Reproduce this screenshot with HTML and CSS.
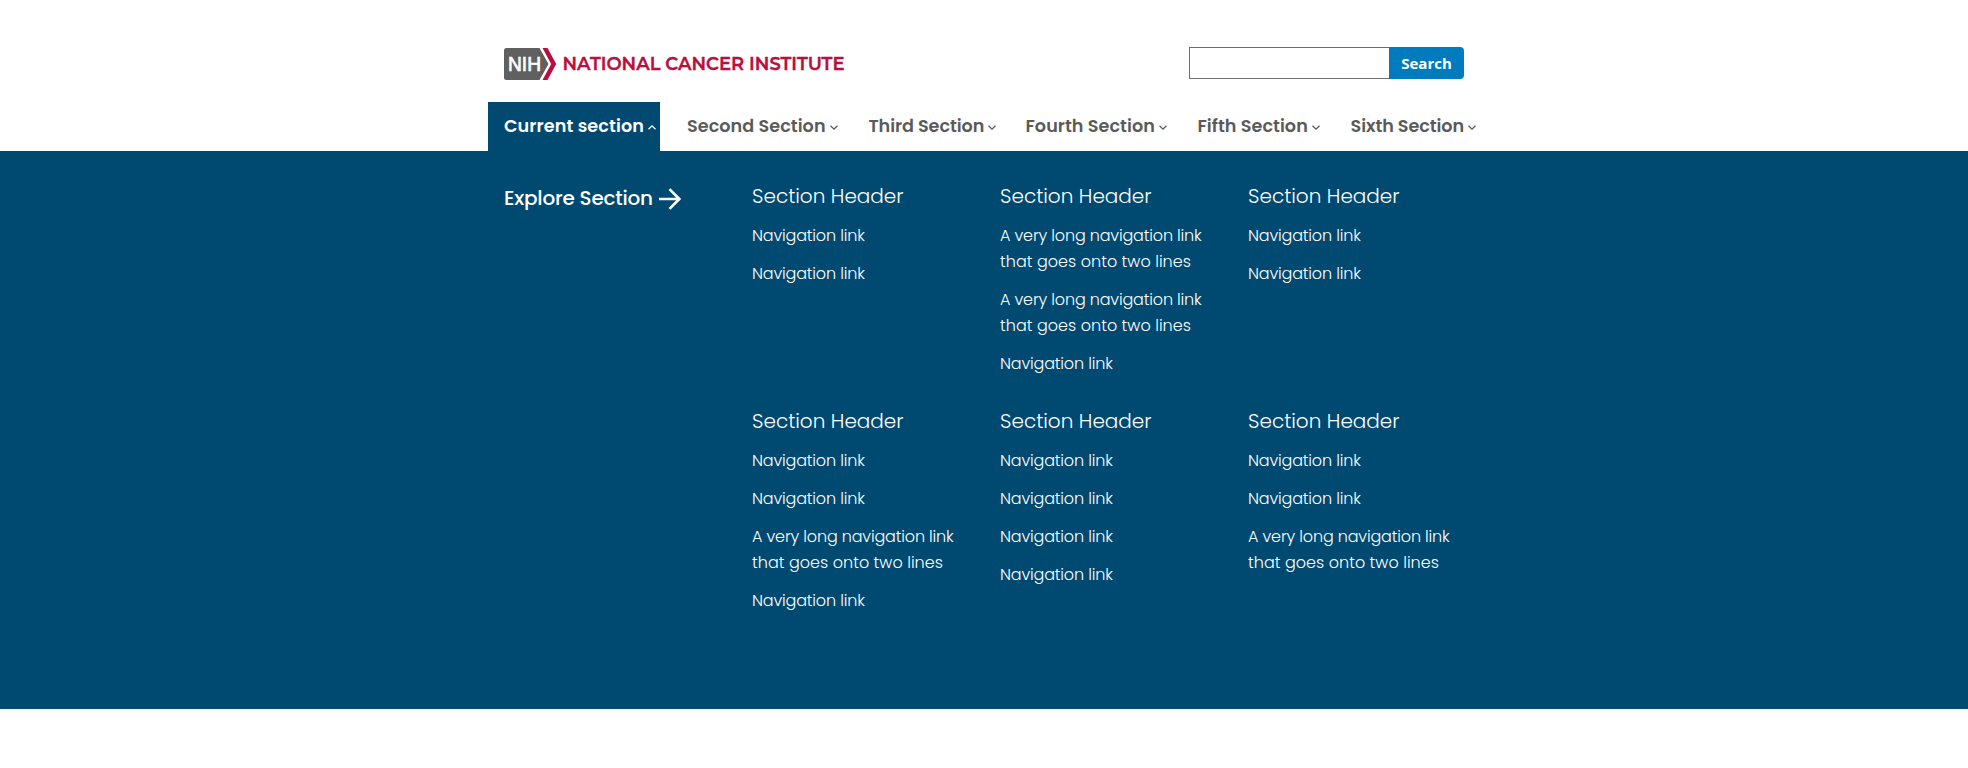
FILE: index.html
```
<!DOCTYPE html>
<html lang="en">
<head>
<meta charset="utf-8">
<title>National Cancer Institute</title>
<link rel="stylesheet" href="styles.css">
</head>
<body>
<header class="header">
  <div class="masthead">
    <a class="logo" aria-label="NIH National Cancer Institute">
      <svg width="342" height="32" viewBox="0 0 342 32">
        <path d="M2.500 0H35.500L44.500 16L35.500 32H2.500Q0 32 0 29.500V2.500Q0 0 2.500 0Z" fill="#606060"/>
        <path d="M38.500 0H43.500L52.200 16L43.500 32H38.500L47.200 16Z" fill="#bb0e3d"/>
        <text class="logo-nih" x="4" y="23" textLength="33" lengthAdjust="spacingAndGlyphs">NIH</text>
        <text class="logo-name" x="58.500" y="22" textLength="282" lengthAdjust="spacingAndGlyphs">NATIONAL CANCER INSTITUTE</text>
      </svg>
    </a>
    <form class="search">
      <input class="search-field" type="text" aria-label="Search">
      <button class="search-button" type="button">Search</button>
    </form>
  </div>
  <nav class="primary">
    <a class="item current"><span>Current section</span><svg class="chevron" viewBox="0 0 8 5"><path d="M.5 4.300L4 .8L7.500 4.300"/></svg></a>
    <a class="item"><span>Second Section</span><svg class="chevron" viewBox="0 0 8 5"><path d="M.5 .7L4 4.200L7.500 .7"/></svg></a>
    <a class="item tight"><span>Third Section</span><svg class="chevron" viewBox="0 0 8 5"><path d="M.5 .7L4 4.200L7.500 .7"/></svg></a>
    <a class="item"><span>Fourth Section</span><svg class="chevron" viewBox="0 0 8 5"><path d="M.5 .7L4 4.200L7.500 .7"/></svg></a>
    <a class="item"><span>Fifth Section</span><svg class="chevron" viewBox="0 0 8 5"><path d="M.5 .7L4 4.200L7.500 .7"/></svg></a>
    <a class="item tight"><span>Sixth Section</span><svg class="chevron" viewBox="0 0 8 5"><path d="M.5 .7L4 4.200L7.500 .7"/></svg></a>
  </nav>
</header>
<section class="mega">
  <div class="mega-inner">
    <a class="explore"><span>Explore Section</span><svg class="arrow" viewBox="0 0 22 22"><path d="M0 11H20M10.500 1.200L20.300 11L10.500 20.800"/></svg></a>
    <div class="groups">
      <div class="group">
        <h2>Section Header</h2>
        <ul><li>Navigation link</li><li>Navigation link</li></ul>
      </div>
      <div class="group">
        <h2>Section Header</h2>
        <ul>
          <li>A very long navigation link <span class="second-line">that goes onto two lines</span></li>
          <li>A very long navigation link <span class="second-line">that goes onto two lines</span></li>
          <li>Navigation link</li>
        </ul>
      </div>
      <div class="group">
        <h2>Section Header</h2>
        <ul><li>Navigation link</li><li>Navigation link</li></ul>
      </div>
      <div class="group">
        <h2>Section Header</h2>
        <ul>
          <li>Navigation link</li><li>Navigation link</li>
          <li>A very long navigation link <span class="second-line">that goes onto two lines</span></li>
          <li>Navigation link</li>
        </ul>
      </div>
      <div class="group">
        <h2>Section Header</h2>
        <ul><li>Navigation link</li><li>Navigation link</li><li>Navigation link</li><li>Navigation link</li></ul>
      </div>
      <div class="group">
        <h2>Section Header</h2>
        <ul>
          <li>Navigation link</li><li>Navigation link</li>
          <li>A very long navigation link <span class="second-line">that goes onto two lines</span></li>
        </ul>
      </div>
    </div>
  </div>
</section>
</body>
</html>
```
FILE: styles.css
```
* { box-sizing: border-box; }
body { margin: 0; background: #fff; font-family: Poppins, Inter, "Open Sans", sans-serif; }
a { color: inherit; text-decoration: none; }

.header { width: 992px; height: 151px; margin: 0 auto; padding-top: 47px; }
.masthead { display: flex; justify-content: space-between; height: 55px; padding: 0 16px; }
.logo { height: 32px; padding-top: 1px; }
.logo svg { display: block; overflow: visible; }
.logo-nih { font: 19.5px "Liberation Sans", Arial, sans-serif; fill: #fff; stroke: #fff; stroke-width: .7px; }
.logo-name { font: 600 18px Montserrat, Lato, sans-serif; fill: #bb0e3d; stroke: #bb0e3d; stroke-width: .35px; }

.search { display: flex; height: 32px; margin: 0; }
.search-field { width: 200px; height: 32px; padding: 0 8px; border: 1px solid #6f6f6f; border-right: 0; border-radius: 0; background: #fff; outline: 0; }
.search-button { width: 75px; height: 32px; padding: 0; border: 0; border-radius: 0 4px 4px 0; background: #007bbd; color: #fff; font: 700 15px/32px "Open Sans", sans-serif; }

.primary { display: grid; grid-template-columns: 183px 181.5px 157px 172px 153px 145px; height: 49px; color: #5a5a5a; }
.item { display: flex; align-items: center; gap: 4px; padding-left: 16px; font-size: 17.6px; font-weight: 600; line-height: 26px; letter-spacing: .05px; white-space: nowrap; }
.item span { margin-bottom: 2px; }
.tight { letter-spacing: -.07px; }
.current { width: 172px; letter-spacing: .1px; background: #004971; color: #fff; }
.chevron { width: 8px; height: 5px; margin-top: 1px; overflow: visible; fill: none; stroke: currentColor; stroke-width: 1.3; }

.mega { height: 558px; background: #004971; color: #fff; }
.mega-inner { display: flex; width: 960px; margin: 0 auto; padding-top: 30px; }
.explore { display: flex; align-items: center; gap: 6px; width: 248px; height: 34px; font-size: 20px; font-weight: 500; letter-spacing: -.22px; white-space: nowrap; }
.arrow { width: 22px; height: 22px; margin-top: 1px; fill: none; stroke: currentColor; stroke-width: 2.600; }
.groups { display: grid; grid-template-columns: repeat(3, 248px); grid-template-rows: 225px auto; margin-right: -32px; }
.group { width: 208px; font-weight: 300; }
.group h2 { margin: 0 0 12px; font-size: 20px; font-weight: 300; line-height: 30px; }
.group ul { display: grid; gap: 12px; margin: 0; padding: 0; list-style: none; }
.group li { font-size: 16px; line-height: 26px; letter-spacing: -.16px; }
.second-line { display: block; letter-spacing: .04px; }
```
